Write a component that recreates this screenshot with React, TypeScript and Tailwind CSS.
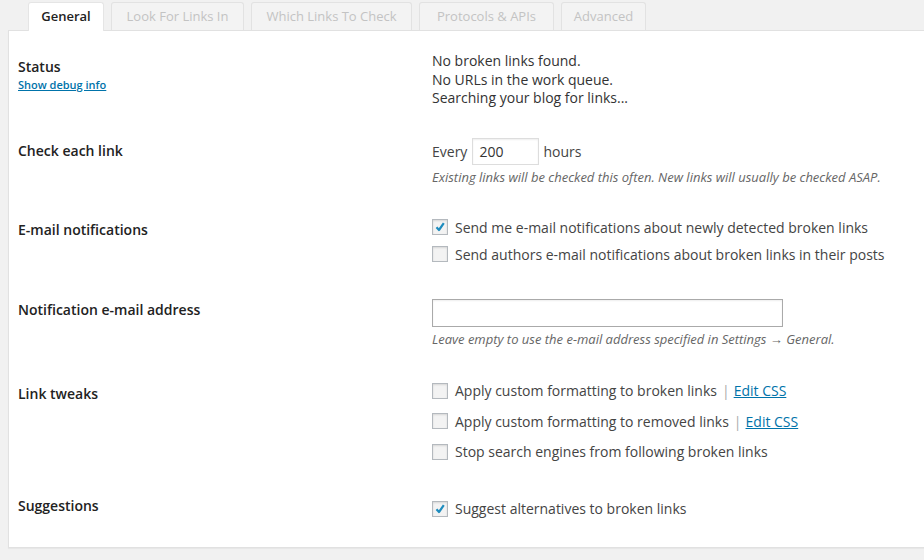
import React from "react";

const tabs = [
  { name: "General", w: "w-[76px]", active: true },
  { name: "Look For Links In", w: "w-[133px]" },
  { name: "Which Links To Check", w: "w-[161px]" },
  { name: "Protocols & APIs", w: "w-[135px]" },
  { name: "Advanced", w: "w-[85px]" },
];

const Checkbox = ({ checked }: { checked?: boolean }) => (
  <span className="relative inline-flex h-[16px] w-[16px] shrink-0 items-center justify-center border border-[#b4b9be] bg-[#f3f3f3] shadow-[inset_0_1px_2px_rgba(0,0,0,0.12)]">
    {checked && (
      <svg width="12" height="12" viewBox="0 0 12 12">
        <path d="M2.5 6.2 L5 9 L9.8 2.2" fill="none" stroke="#1e8cbe" strokeWidth="2.2" strokeLinejoin="round" />
      </svg>
    )}
  </span>
);

const Row = ({ h, checked, children }: { h: string; checked?: boolean; children: React.ReactNode }) => (
  <div className={`flex items-center ${h}`}>
    <Checkbox checked={checked} />
    <span className="ml-[7px]">{children}</span>
  </div>
);

const Label = ({ pt, children }: { pt: string; children: React.ReactNode }) => (
  <div className={`w-[423px] shrink-0 pl-[9px] ${pt}`}>
    <div className="text-[14px] font-semibold leading-[19px] text-[#222]">{children}</div>
  </div>
);

const EditCss = () => (
  <>
    <span className="ml-[5px] mr-[4px] text-[#aaa]">|</span>
    <a href="#" className="text-[#0073aa] underline">Edit CSS</a>
  </>
);

export default function App() {
  return (
    <div className="min-h-[560px] w-[924px] overflow-hidden bg-[#f1f1f1] font-['Open_Sans',sans-serif] text-[14px] text-[#444]">
      {/* tabs */}
      <div className="flex h-[30px] items-end gap-[7px] pl-[28px] pt-[2px]">
        {tabs.map((t) =>
          t.active ? (
            <div
              key={t.name}
              className={`${t.w} relative z-10 -mb-px flex h-[29px] items-center justify-center rounded-t-[3px] border border-b-0 border-[#e5e5e5] bg-white text-[13px] font-semibold text-[#222]`}
            >
              {t.name}
            </div>
          ) : (
            <div
              key={t.name}
              className={`${t.w} flex h-[28px] items-center justify-center rounded-t-[3px] border border-b-0 border-[#e2e2e2] bg-[#f3f3f3] text-[13px] text-[#c3c3c3]`}
            >
              {t.name}
            </div>
          )
        )}
      </div>

      {/* panel */}
      <div className="ml-[8px] border border-r-0 border-[#e1e1e1] bg-white pb-[23px] shadow-[0_1px_1px_rgba(0,0,0,0.04)]">
        {/* Status */}
        <div className="flex">
          <div className="w-[423px] shrink-0 pl-[9px] pt-[26px]">
            <div className="text-[14px] font-semibold leading-[19px] text-[#222]">Status</div>
            <a href="#" className="mt-[1px] block text-[11px] font-semibold leading-[15px] text-[#0073aa] underline">
              Show debug info
            </a>
          </div>
          <div className="pt-[21px] leading-[18.5px] text-[#333]">
            <div>No broken links found.</div>
            <div>No URLs in the work queue.</div>
            <div>Searching your blog for links...</div>
          </div>
        </div>

        {/* Check each link */}
        <div className="flex">
          <Label pt="pt-[33px]">Check each link</Label>
          <div className="pt-[30px]">
            <div className="flex h-[27px] items-center">
              <span>Every</span>
              <input
                readOnly
                value="200"
                className="ml-[5px] mr-[4px] h-[27px] w-[67px] border border-[#ddd] px-[6px] text-[14px] text-[#333] shadow-[inset_0_1px_2px_rgba(0,0,0,0.07)] outline-none"
              />
              <span>hours</span>
            </div>
            <div className="mt-[4px] text-[13px] italic leading-[17px] text-[#666]">
              Existing links will be checked this often. New links will usually be checked ASAP.
            </div>
          </div>
        </div>

        {/* E-mail notifications */}
        <div className="flex">
          <Label pt="pt-[34px]">E-mail notifications</Label>
          <div className="pt-[28px]">
            <Row h="h-[27px]" checked>Send me e-mail notifications about newly detected broken links</Row>
            <Row h="h-[27px]">Send authors e-mail notifications about broken links in their posts</Row>
          </div>
        </div>

        {/* Notification address */}
        <div className="flex">
          <Label pt="pt-[32px]">Notification e-mail address</Label>
          <div className="pt-[31px]">
            <input
              readOnly
              className="block h-[28px] w-[351px] border border-[#aaa] bg-white shadow-[inset_0_1px_2px_rgba(0,0,0,0.07)] outline-none"
            />
            <div className="mt-[4px] text-[13px] italic leading-[17px] text-[#666]">
              Leave empty to use the e-mail address specified in Settings → General.
            </div>
          </div>
        </div>

        {/* Link tweaks */}
        <div className="flex">
          <Label pt="pt-[36px]">Link tweaks</Label>
          <div className="pt-[28px]">
            <Row h="h-[30px]">
              Apply custom formatting to broken links<EditCss />
            </Row>
            <Row h="h-[31px]">
              Apply custom formatting to removed links<EditCss />
            </Row>
            <Row h="h-[30px]">Stop search engines from following broken links</Row>
          </div>
        </div>

        {/* Suggestions */}
        <div className="flex">
          <Label pt="pt-[29px]">Suggestions</Label>
          <div className="pt-[27px]">
            <Row h="h-[30px]" checked>Suggest alternatives to broken links</Row>
          </div>
        </div>
      </div>
    </div>
  );
}
